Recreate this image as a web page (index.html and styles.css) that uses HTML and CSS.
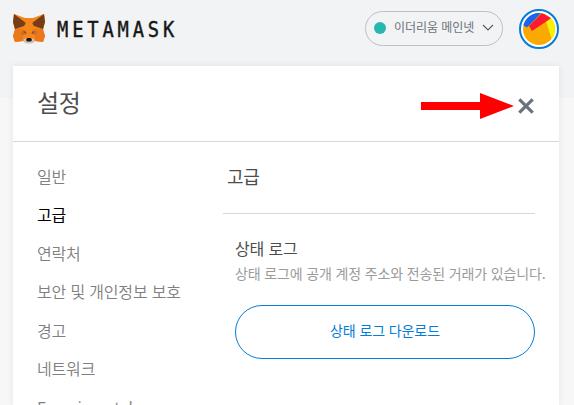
FILE: index.html
```html
<!DOCTYPE html>
<html lang="ko">
<head>
<meta charset="utf-8">
<title>MetaMask</title>
<link rel="stylesheet" href="styles.css">
</head>
<body>
<header class="app-header">
  <svg class="fox" viewBox="0 0 32 30" aria-hidden="true">
    <path fill="#f6851b" d="M1 0 12 4h8L31 0l1 8-2 8 2 6-2 6-8-1-3 2h-6l-3-2-8 1-2-6 2-6-2-8z"/>
    <path fill="#e9791b" d="M2 15h9l-1 6-10 1zM30 15h-9l1 6 10 1zM0 22l10-1v6l-8 1zM32 22l-10-1v6l8 1z"/>
    <path fill="#763d16" d="M1 0 13 9 11 12 2 15 0 8zM31 0 19 9 21 12 30 15 32 8z"/>
    <path fill="#f6851b" d="M12 4h8l-1 9 2 9-3 2h-4l-3-2 2-9z"/>
    <path fill="#d96a18" d="M8 18l4-2 2 4-5 1zM24 18l-4-2-2 4 5 1z"/>
    <path fill="#54555a" d="M10 17.500l3 .3v2zM22 17.500l-3 .3v2z"/>
    <path fill="#d7c1b3" d="M10 26l3-2h6l3 2-3 3.500h-6z"/>
    <path fill="#161616" d="M14 24h4l1 2-1 1.500h-4L13 26z"/>
  </svg>
  <span class="wordmark">METAMASK</span>
  <div class="network">
    <span class="dot"></span>
    <span class="network-name">이더리움 메인넷</span>
    <svg class="chevron" viewBox="0 0 12 8"><path d="M1 1l5 5 5-5"/></svg>
  </div>
  <svg class="account" viewBox="0 0 40 40">
    <defs><clipPath id="avatar"><circle cx="20" cy="20" r="16"/></clipPath></defs>
    <circle cx="20" cy="20" r="19" fill="#fff" stroke="#037dd6" stroke-width="2"/>
    <g clip-path="url(#avatar)">
      <path fill="#faa900" d="M0 0h40v40H0z"/>
      <path fill="#f3f500" d="M27 12 40 4v30h-6z"/>
      <path fill="#fc1a33" d="M10 17 23 4l9 5-1 1-18 12z"/>
      <path fill="#1865f2" d="M0 14 8 0h18L10.500 16 8 18.500z"/>
    </g>
  </svg>
</header>
<main class="card">
  <div class="card-header">
    <h1>설정</h1>
    <svg class="pointer" viewBox="0 0 93 26"><path d="M0 9h59V0l34 13-34 13v-9H0z"/></svg>
    <svg class="close" viewBox="0 0 16 16"><path d="M1.300 1.300l13.400 13.400M14.700 1.300 1.300 14.700"/></svg>
  </div>
  <div class="card-body">
    <nav>
      <a>일반</a>
      <a class="active">고급</a>
      <a>연락처</a>
      <a>보안 및 개인정보 보호</a>
      <a>경고</a>
      <a>네트워크</a>
      <a>Experimental</a>
    </nav>
    <section class="content">
      <h2>고급</h2>
      <div class="setting">
        <h3>상태 로그</h3>
        <p>상태 로그에 공개 계정 주소와 전송된 거래가 있습니다.</p>
        <button>상태 로그 다운로드</button>
      </div>
    </section>
  </div>
</main>
</body>
</html>
```
FILE: styles.css
```css
* { box-sizing: border-box; }
body {
  margin: 0;
  height: 405px;
  overflow: hidden;
  background: linear-gradient(#f2f3f4 98px, #f7f7f7 98px);
  font-family: "Noto Sans CJK KR", sans-serif;
}
.app-header {
  display: flex;
  align-items: center;
  height: 66px;
  padding: 0 15px 8px 13px;
}
.fox { width: 32px; height: 30px; }
.wordmark {
  width: 130px;
  margin: 2px 0 0 12px;
  font: 20.5px/30px "DejaVu Sans Mono", monospace;
  letter-spacing: 4.2px;
  color: #161616;
  -webkit-text-stroke: 0.4px #161616;
  transform: scaleX(0.915);
  transform-origin: 0 50%;
}
.network {
  display: flex;
  align-items: center;
  width: 138px;
  height: 35px;
  margin: 0 0 1px auto;
  padding: 0 8px 1px;
  border: 1px solid #bbc0c5;
  border-radius: 18px;
}
.dot { width: 12px; height: 12px; border-radius: 50%; background: #29b6af; }
.network-name { margin: -2px 0 0 8px; font-size: 12px; line-height: 18px; letter-spacing: -0.05px; color: #6a737d; white-space: nowrap; }
.chevron { width: 12px; height: 8px; margin-left: auto; fill: none; stroke: #5b5f65; stroke-width: 1.2; }
.account { width: 40px; height: 40px; margin-left: 16px; }
.card {
  width: 546px;
  height: 339px;
  margin-left: 13px;
  background: #fff;
  box-shadow: 0 0 7px rgba(0, 0, 0, 0.08);
}
.card-header {
  display: flex;
  align-items: center;
  height: 76px;
  padding: 0 25px 0 24px;
  border-bottom: 1px solid #d2d8dd;
}
h1, h2, h3, p { margin: 0; font-weight: 400; }
h1 { margin-top: -4px; font-size: 24px; line-height: 34px; letter-spacing: -0.3px; color: #4d4d4d; }
.pointer { width: 93px; height: 26px; margin: 4px 4px 0 auto; fill: #f00; }
.close { width: 16px; height: 16px; margin-top: 5px; fill: none; stroke: #6a737d; stroke-width: 3.2; }
.card-body { display: flex; height: 263px; }
nav { width: 210px; padding: 14.5px 0 0 24px; }
nav a { display: block; height: 38.5px; font-size: 16px; line-height: 38px; letter-spacing: -0.17px; color: #808080; font-weight: 350; }
nav .active { color: #000; font-weight: 400; }
.content { width: 312px; }
h2 { height: 72px; padding-left: 4px; border-bottom: 1px solid #d8d8d8; font-size: 18px; line-height: 69px; letter-spacing: -0.2px; color: #4d4d4d; }
.setting { padding: 23px 0 0 12px; }
h3 { font-size: 16px; line-height: 23px; letter-spacing: -0.15px; color: #4d4d4d; }
p { font-size: 14px; line-height: 26px; letter-spacing: -0.14px; color: #9b9b9b; white-space: nowrap; }
button {
  display: block;
  width: 300px;
  height: 54px;
  margin-top: 19px;
  padding: 0 0 4px;
  border: 1px solid #037dd6;
  border-radius: 27px;
  background: #fff;
  color: #037dd6;
  font: 14px/20px "Noto Sans CJK KR", sans-serif;
  letter-spacing: -0.1px;
}
```
